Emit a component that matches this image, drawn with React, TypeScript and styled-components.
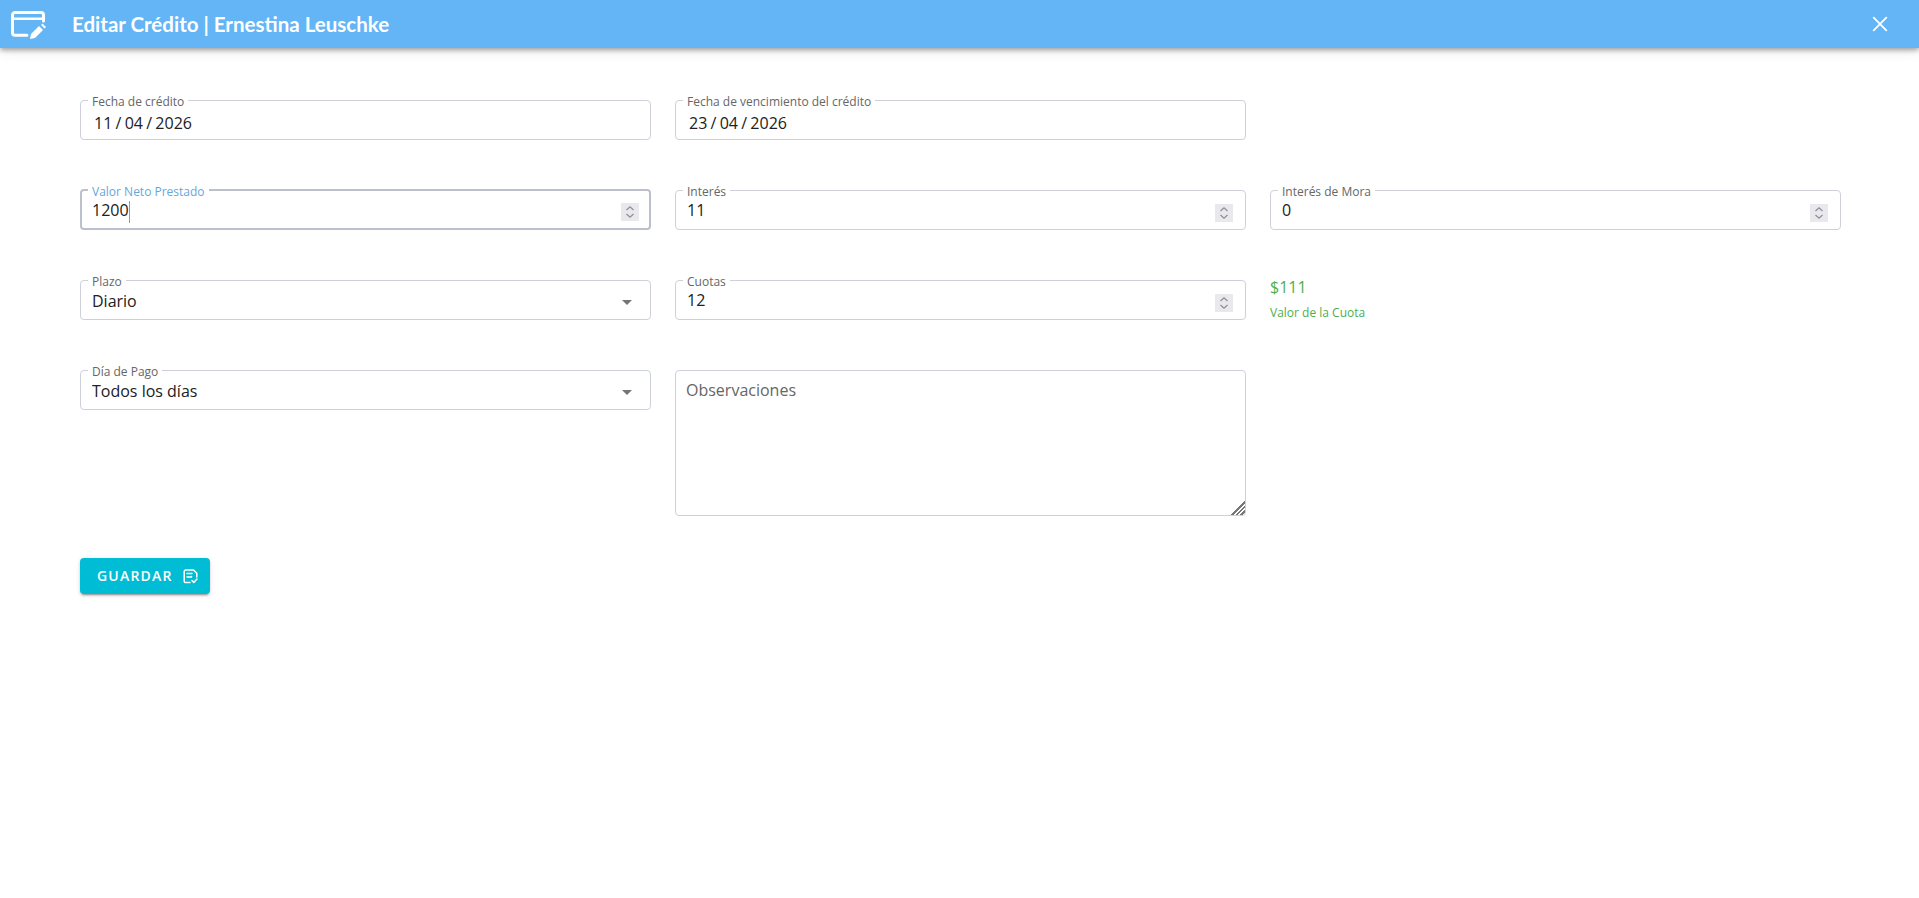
import React from "react";
import styled, { createGlobalStyle } from "styled-components";

const Global = createGlobalStyle`
  html, body { margin: 0; padding: 0; background: #fff; }
  body { font-family: "Open Sans", "Noto Sans", sans-serif; color: #212121; }
  * { box-sizing: border-box; }
`;

const Page = styled.div`
  min-height: 898px;
  display: flex;
  flex-direction: column;
`;

const Header = styled.header`
  height: 48px;
  flex: none;
  display: flex;
  align-items: center;
  padding: 0 27px 0 11px;
  background: #64b5f6;
  color: #fff;
  box-shadow: 0 2px 5px rgba(0, 0, 0, 0.35), 0 4px 12px rgba(0, 0, 0, 0.08);
`;

const Title = styled.h1`
  margin: 0 0 0 25px;
  flex: 1;
  font-family: "Lato", "Noto Sans", sans-serif;
  font-size: 20.5px;
  font-weight: 700;
  line-height: 48px;
`;

const CloseButton = styled.button`
  width: 24px;
  height: 24px;
  padding: 0;
  display: flex;
  align-items: center;
  justify-content: center;
  border: 0;
  background: none;
  color: #fff;
`;

const Form = styled.form`
  padding: 46px 78px 0 80px;
`;

const Grid = styled.div`
  display: grid;
  grid-template-columns: repeat(3, 1fr);
  column-gap: 24px;
  row-gap: 44px;
  align-items: start;
`;

const Field = styled.fieldset<{ $focused?: boolean }>`
  margin: 0;
  min-width: 0;
  height: 46px;
  display: flex;
  align-items: center;
  border: ${(p) => (p.$focused ? "2px solid #bcc0cc" : "1px solid #ced1da")};
  padding: ${(p) => (p.$focused ? "0 10px" : "0 12px 0 11px")};
  border-radius: 4px;
`;

const Legend = styled.legend<{ $focused?: boolean }>`
  margin: 0 0 0 -4px;
  padding: 0 4px;
  height: 12px;
  font-size: 12px;
  line-height: 15px;
  color: ${(p) => (p.$focused ? "#64a7dc" : "#666666")};
`;

const Input = styled.input`
  flex: 1;
  min-width: 0;
  height: 26px;
  margin-top: -6px;
  padding: 0;
  border: 0;
  outline: 0;
  background: none;
  font: 16px/26px "Open Sans", "Noto Sans", sans-serif;
  color: #212121;
  &::-webkit-inner-spin-button,
  &::-webkit-outer-spin-button {
    -webkit-appearance: none;
    margin: 0;
  }
`;

const ActiveInput = styled(Input)`
  flex: none;
  width: 36.6px;
  margin-top: -4px;
  caret-color: transparent;
`;

const TextCaret = styled.span`
  flex: none;
  width: 1px;
  height: 22px;
  background: #64a7dc;
`;

const DateInput = styled(Input)`
  margin-top: 0;
  padding-left: 2px;
  word-spacing: -0.9px;
`;

const Spinner = styled.span`
  flex: none;
  width: 18px;
  height: 18px;
  margin-left: auto;
  display: flex;
  background: #e8e8ed;
  color: #8d8d99;
`;

const Select = styled.select`
  flex: 1;
  min-width: 0;
  height: 26px;
  margin-top: -4px;
  padding: 0;
  border: 0;
  outline: 0;
  appearance: none;
  background: none;
  font: 16px/26px "Open Sans", "Noto Sans", sans-serif;
  color: #212121;
`;

const Caret = styled.span`
  flex: none;
  width: 0;
  height: 0;
  margin-right: 6px;
  border-left: 5px solid transparent;
  border-right: 5px solid transparent;
  border-top: 5px solid #757575;
  pointer-events: none;
`;

const Summary = styled.div`
  height: 46px;
  color: #4caf50;
`;

const Amount = styled.div`
  margin-top: 2px;
  font-size: 16px;
  line-height: 22px;
`;

const Caption = styled.div`
  margin-top: 7px;
  font-size: 12px;
  line-height: 16px;
`;

const Notes = styled.textarea`
  display: block;
  width: 100%;
  height: 146px;
  padding: 7px 10px;
  border: 1px solid #ced1da;
  border-radius: 4px;
  outline: 0;
  resize: both;
  font: 16px/24px "Open Sans", "Noto Sans", sans-serif;
  color: #212121;
  &::placeholder {
    color: #666666;
    opacity: 1;
  }
  &::-webkit-resizer {
    background:
      linear-gradient(135deg, #fff 50%, transparent 50%),
      repeating-linear-gradient(135deg, transparent 0 1.6px, #777 1.6px 3.2px);
  }
`;

const NotesCell = styled.div`
  padding-top: 6px;
`;

const SaveButton = styled.button`
  margin-top: 42px;
  width: 130px;
  height: 36px;
  padding: 0 0 0 17px;
  display: flex;
  align-items: center;
  gap: 10px;
  border: 0;
  border-radius: 4px;
  background: #00bcd4;
  color: #fff;
  font: 600 14px/36px "Open Sans", "Noto Sans", sans-serif;
  letter-spacing: 1.2px;
  box-shadow: 0 3px 1px -2px rgba(0, 0, 0, 0.2), 0 2px 2px rgba(0, 0, 0, 0.14), 0 1px 5px rgba(0, 0, 0, 0.12);
`;

const CreditEditIcon = () => (
  <svg width="36" height="30" viewBox="0 0 36 30" fill="none" stroke="#fff" strokeLinecap="round" strokeLinejoin="round">
    <path strokeWidth="3" d="M16 26.200H4A2.500 2.500 0 0 1 1.500 23.700V6A2.500 2.500 0 0 1 4 3.500H30A2.500 2.500 0 0 1 32.500 6V12" />
    <path strokeWidth="2.400" d="M1.500 9.800H32.500" />
    <path d="M19 30l1-5 8-8 4 4-8 8z" fill="#fff" stroke="none" />
    <path d="M30 16l1.500-1.500 3.500 3.500-1.500 1.500z" fill="#fff" stroke="none" />
  </svg>
);

const CloseIcon = () => (
  <svg width="16" height="16" viewBox="0 0 16 16" fill="none" stroke="#fff" strokeWidth="1.800">
    <path d="M1.200 1.200l13.600 13.600M14.800 1.200L1.200 14.800" />
  </svg>
);

const SpinIcon = () => (
  <svg width="18" height="18" viewBox="0 0 18 18" fill="none" stroke="currentColor" strokeWidth="1.200">
    <path d="M5.500 7l3.500-3.200L12.500 7M5.500 11l3.500 3.200L12.500 11" />
  </svg>
);

const SaveIcon = () => (
  <svg width="15" height="15" viewBox="0 0 15 15" fill="none" stroke="#fff" strokeWidth="1.500" strokeLinejoin="round" strokeLinecap="round">
    <path d="M7 13.600H2.600a1.400 1.400 0 0 1-1.400-1.400V2.400A1.400 1.400 0 0 1 2.600 1h7.900l3.300 3.300v3.700" />
    <path d="M4 4.500h5" />
    <path d="M4 8h4.500V7.500" />
    <path d="M9 11.600l1.800 1.800 3.200-3.400" />
  </svg>
);

type FieldProps = { label: string; value: string; focused?: boolean };

const NumberField = ({ label, value, focused }: FieldProps) => (
  <Field $focused={focused}>
    <Legend $focused={focused}>{label}</Legend>
    {focused ? (
      <>
        <ActiveInput type="number" defaultValue={value} autoFocus />
        <TextCaret />
      </>
    ) : (
      <Input type="number" defaultValue={value} />
    )}
    <Spinner>
      <SpinIcon />
    </Spinner>
  </Field>
);

const DateField = ({ label, value }: FieldProps) => (
  <Field>
    <Legend>{label}</Legend>
    <DateInput type="text" defaultValue={value} />
  </Field>
);

const SelectField = ({ label, value }: FieldProps) => (
  <Field>
    <Legend>{label}</Legend>
    <Select defaultValue={value}>
      <option>{value}</option>
    </Select>
    <Caret />
  </Field>
);

export default function App() {
  return (
    <Page>
      <Global />
      <Header>
        <CreditEditIcon />
        <Title>Editar Crédito | Ernestina Leuschke</Title>
        <CloseButton type="button" aria-label="Cerrar">
          <CloseIcon />
        </CloseButton>
      </Header>
      <Form>
        <Grid>
          <DateField label="Fecha de crédito" value="11 / 04 / 2026" />
          <DateField label="Fecha de vencimiento del crédito" value="23 / 04 / 2026" />
          <div />
          <NumberField label="Valor Neto Prestado" value="1200" focused />
          <NumberField label="Interés" value="11" />
          <NumberField label="Interés de Mora" value="0" />
          <SelectField label="Plazo" value="Diario" />
          <NumberField label="Cuotas" value="12" />
          <Summary>
            <Amount>$111</Amount>
            <Caption>Valor de la Cuota</Caption>
          </Summary>
          <SelectField label="Día de Pago" value="Todos los días" />
          <NotesCell>
            <Notes placeholder="Observaciones" />
          </NotesCell>
        </Grid>
        <SaveButton type="button">
          GUARDAR
          <SaveIcon />
        </SaveButton>
      </Form>
    </Page>
  );
}
